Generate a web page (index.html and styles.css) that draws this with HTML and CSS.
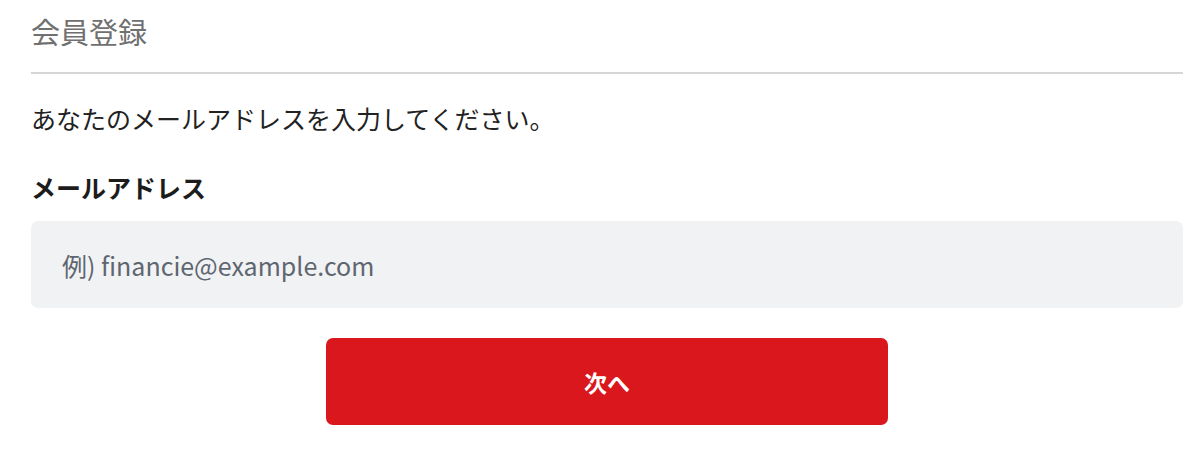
FILE: index.html
```html
<!DOCTYPE html>
<html lang="ja">
<head>
<meta charset="utf-8">
<title>会員登録</title>
<link rel="stylesheet" href="styles.css">
</head>
<body>
<main class="page">
  <h1 class="title">会員登録</h1>
  <hr class="divider">
  <p class="lead">あなたのメールアドレスを入力してください。</p>
  <form class="form">
    <label class="label" for="email">メールアドレス</label>
    <input class="input" id="email" type="email" placeholder="例) financie@example.com">
    <div class="actions">
      <button class="btn" type="button">次へ</button>
    </div>
  </form>
</main>
</body>
</html>
```

FILE: styles.css
```css
html, body {
  margin: 0;
  padding: 0;
  background: #ffffff;
}
body {
  font-family: "Noto Sans CJK JP", "Noto Sans", sans-serif;
  color: #222222;
}
.page {
  width: 1152px;
  margin-left: 31px;
  padding-top: 11px;
}
.title {
  margin: 0;
  font-size: 29px;
  font-weight: 400;
  line-height: 40px;
  color: #707070;
}
.divider {
  margin: 21px 0 0;
  border: 0;
  border-top: 2px solid #d6d6d6;
  height: 0;
}
.lead {
  margin: 26px 0 0;
  font-size: 25px;
  line-height: 36px;
  color: #222222;
}
.form {
  display: flex;
  flex-direction: column;
}
.label {
  margin-top: 33px;
  font-size: 25px;
  font-weight: 700;
  line-height: 36px;
  color: #1c1c1c;
}
.input {
  margin-top: 16px;
  height: 87px;
  box-sizing: border-box;
  border: 0;
  border-radius: 7px;
  background: #f1f2f4;
  padding: 0 31px;
  font-family: "Noto Sans CJK JP", "Noto Sans", sans-serif;
  font-size: 25px;
  color: #333;
  outline: none;
}
.input::placeholder {
  color: #5e6670;
  opacity: 1;
}
.actions {
  display: flex;
  justify-content: center;
  margin-top: 30px;
}
.btn {
  width: 562px;
  height: 87px;
  border: 0;
  border-radius: 7px;
  background: #da171c;
  color: #ffffff;
  font-family: "Noto Sans CJK JP", "Noto Sans", sans-serif;
  font-size: 23px;
  font-weight: 700;
  cursor: pointer;
}
```
